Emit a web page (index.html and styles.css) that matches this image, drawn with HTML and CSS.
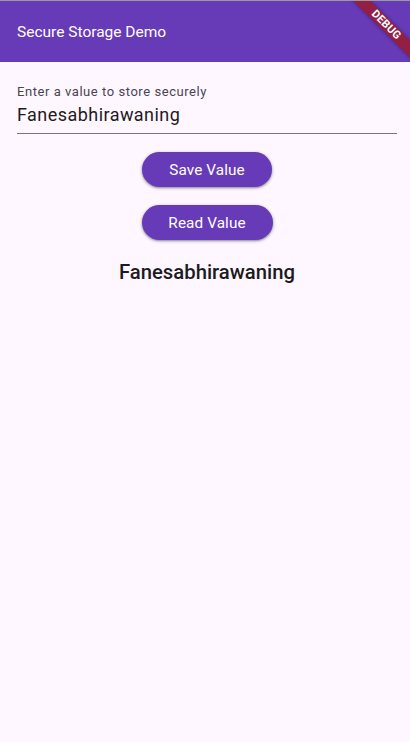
FILE: index.html
```html
<!DOCTYPE html>
<html>
<head>
<meta charset="utf-8">
<link rel="stylesheet" href="styles.css">
</head>
<body>
<div class="screen">
  <header class="appbar">
    <span class="title">Secure Storage Demo</span>
    <div class="banner"><span>DEBUG</span></div>
  </header>
  <main class="content">
    <label class="field">
      <span class="label">Enter a value to store securely</span>
      <span class="value">Fanesabhirawaning</span>
    </label>
    <div class="actions">
      <button class="btn save">Save Value</button>
      <button class="btn read">Read Value</button>
    </div>
    <div class="result">Fanesabhirawaning</div>
  </main>
</div>
</body>
</html>
```
FILE: styles.css
```css
* { box-sizing: border-box; }
html, body { margin: 0; padding: 0; }
body {
  width: 410px;
  height: 742px;
  overflow: hidden;
  background: #fef7ff;
  font-family: Roboto, "Noto Sans", sans-serif;
}
.screen {
  border-top: 1px solid #9a9a9a;
  height: 742px;
}
.appbar {
  position: relative;
  height: 61px;
  background: #673ab7;
  display: flex;
  align-items: center;
  padding-left: 17px;
  overflow: hidden;
}
.title {
  color: #ffffff;
  font-size: 15.5px;
  letter-spacing: 0;
}
.banner {
  position: absolute;
  top: 18px;
  right: -26px;
  width: 100px;
  height: 12px;
  background: #931f45;
  transform: rotate(45deg);
  display: flex;
  align-items: center;
  justify-content: center;
  box-shadow: 0 0 4px rgba(0,0,0,0.35);
}
.banner span {
  color: #fff;
  font-size: 11px;
  font-weight: 700;
  letter-spacing: 0.3px;
  line-height: 12px;
}
.content {
  padding: 0 13px 0 17px;
}
.field {
  display: flex;
  flex-direction: column;
  border-bottom: 1px solid #79747e;
  padding-top: 22px;
  padding-bottom: 6px;
}
.label {
  font-size: 13px;
  color: #49454f;
  letter-spacing: 0.55px;
  line-height: 16px;
}
.value {
  font-size: 18px;
  color: #1d1b20;
  letter-spacing: 0.45px;
  line-height: 24px;
  margin-top: 3px;
}
.actions {
  display: flex;
  flex-direction: column;
  align-items: center;
  gap: 18px;
  margin-top: 18px;
}
.btn {
  border: none;
  border-radius: 18px;
  height: 35px;
  background: #673ab7;
  color: #ffffff;
  font-family: Roboto, sans-serif;
  font-size: 15.3px;
  letter-spacing: 0.1px;
  box-shadow: 0 1px 2px rgba(0,0,0,0.3), 0 1px 3px 1px rgba(0,0,0,0.15);
}
.save { width: 130px; }
.read { width: 131px; }
.result {
  margin-top: 20px;
  text-align: center;
  font-size: 20.3px;
  font-weight: 500;
  color: #1d1b20;
}
```
